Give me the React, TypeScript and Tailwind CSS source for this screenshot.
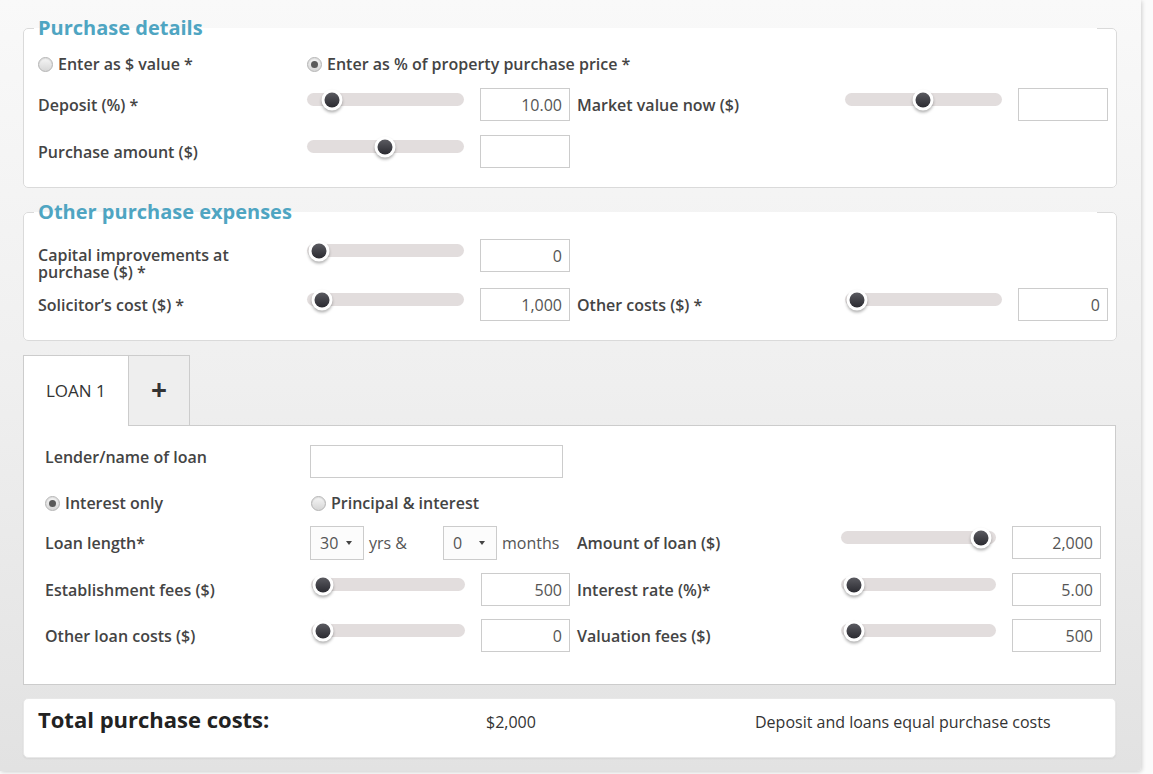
import React from "react";

const font = "font-['Open_Sans',sans-serif]";

const Radio = ({ checked }: { checked?: boolean }) => (
    <span className="flex h-[15px] w-[15px] shrink-0 items-center justify-center rounded-full border border-[#b4b4b4] bg-linear-to-b from-[#f6f6f6] to-[#d6d6d6] shadow-[inset_0_1px_1px_rgba(0,0,0,0.1)]">
        {checked && <span className="h-[7px] w-[7px] rounded-full bg-[#5a5a5a]" />}
    </span>
);

const Slider = ({ pos, w }: { pos: number; w: string }) => (
    <div className={`relative mt-[5px] h-[13px] shrink-0 rounded-full bg-[#e2dddd] ${w}`}>
        <span
            className="absolute top-1/2 flex h-[21px] w-[21px] -translate-x-1/2 -translate-y-1/2 items-center justify-center rounded-full bg-white shadow-[0_2px_3px_rgba(0,0,0,0.3)]"
            style={{ left: pos }}
        >
            <span className="h-[15px] w-[15px] rounded-full bg-linear-to-b from-[#5b5b61] to-[#2b2b31]" />
        </span>
    </div>
);

const NumBox = ({ value, w, ml = "ml-[16px]" }: { value: string; w: string; ml?: string }) => (
    <div className={`flex h-[33px] shrink-0 items-center justify-end border border-[#cccccc] bg-white pr-[7px] text-[16px] text-[#555] ${w} ${ml}`}>
        {value}
    </div>
);

const Label = ({ children, w, pt = "pt-[7px]" }: { children: React.ReactNode; w: string; pt?: string }) => (
    <div className={`shrink-0 text-[16px] leading-5 font-semibold text-[#444] ${pt} ${w}`}>{children}</div>
);

const Select = ({ value }: { value: string }) => (
    <div className="flex h-[34px] w-[54px] shrink-0 items-center border border-[#cccccc] bg-[#fcfcfc] pl-[9px] text-[16px] text-[#555]">
        <span className="w-[26px]">{value}</span>
        <span className="h-0 w-0 border-x-[3.5px] border-t-[4px] border-x-transparent border-t-[#444]" />
    </div>
);

const Fieldset = ({ title, children }: { title: string; children: React.ReactNode }) => (
    <fieldset className="w-[1094px] rounded-[5px] border border-[#dadada] bg-white pr-[7px] pb-[19px] pl-[10px]">
        <legend className="w-[1063px] pl-[4px] text-[20px] leading-7 font-bold text-[#4fa5c2]">{title}</legend>
        <div className="ml-[4px] flex flex-col">{children}</div>
    </fieldset>
);

type Half = { label: React.ReactNode; pos: number; value: string };

const PurchaseRow = ({ left, right, h = "h-[33px]", pt }: { left: Half; right?: Half; h?: string; pt?: string }) => (
    <div className={`flex items-start ${h}`}>
        <Label w="w-[269px]" pt={pt}>
            {left.label}
        </Label>
        <Slider pos={left.pos} w="w-[157px]" />
        <NumBox value={left.value} w="w-[90px]" />
        {right && (
            <>
                <div className="ml-[7px]">
                    <Label w="w-[268px]">{right.label}</Label>
                </div>
                <Slider pos={right.pos} w="w-[157px]" />
                <NumBox value={right.value} w="w-[90px]" />
            </>
        )}
    </div>
);

const LoanRow = ({ left, right }: { left: Half; right: Half }) => (
    <div className="flex h-[33px] items-start">
        <Label w="w-[266px]">{left.label}</Label>
        <Slider pos={left.pos} w="w-[154px]" />
        <NumBox value={left.value} w="w-[89px]" />
        <div className="ml-[7px]">
            <Label w="w-[264px]">{right.label}</Label>
        </div>
        <Slider pos={right.pos} w="w-[155px]" />
        <NumBox value={right.value} w="w-[89px]" />
    </div>
);

const App = () => {
    return (
        <div className={`h-[774px] w-[1153px] overflow-hidden bg-[#fbfbfb] ${font}`}>
            <div className="h-[771px] w-[1141px] rounded-br-[4px] bg-linear-to-b from-[#f9f9f9] via-[#efefef] to-[#e2e2e2] pt-[14px] pl-[23px] shadow-[1px_1px_4px_rgba(0,0,0,0.18)]">
                <Fieldset title="Purchase details">
                    <div className="mt-[12px] flex h-[20px] items-center text-[16px] font-semibold text-[#444]">
                        <div className="flex w-[269px] items-center gap-[5px]">
                            <Radio />
                            <span>Enter as $ value *</span>
                        </div>
                        <div className="flex items-center gap-[5px]">
                            <Radio checked />
                            <span>Enter as % of property purchase price *</span>
                        </div>
                    </div>
                    <div className="mt-[14px] flex flex-col gap-[14px]">
                        <PurchaseRow
                            left={{ label: "Deposit (%) *", pos: 25, value: "10.00" }}
                            right={{ label: "Market value now ($)", pos: 78, value: "" }}
                        />
                        <PurchaseRow left={{ label: "Purchase amount ($)", pos: 78, value: "" }} />
                    </div>
                </Fieldset>

                <div className="mt-[10px]">
                    <Fieldset title="Other purchase expenses">
                        <div className="mt-[13px] flex flex-col gap-[14px]">
                            <PurchaseRow
                                h="h-[35px]"
                                pt="pt-[8px] leading-[17px]"
                                left={{
                                    label: (
                                        <>
                                            Capital improvements at
                                            <br />
                                            purchase ($) *
                                        </>
                                    ),
                                    pos: 12,
                                    value: "0"
                                }}
                            />
                            <PurchaseRow
                                left={{ label: "Solicitor’s cost ($) *", pos: 15, value: "1,000" }}
                                right={{ label: "Other costs ($) *", pos: 12, value: "0" }}
                            />
                        </div>
                    </Fieldset>
                </div>

                <div className="mt-[14px] flex">
                    <div className="relative z-10 flex h-[71px] w-[106px] items-center border border-b-0 border-[#cccccc] bg-white pl-[22px] text-[17px] text-[#333]">
                        LOAN 1
                    </div>
                    <div className="-ml-px flex h-[71px] w-[62px] items-center justify-center border border-[#cccccc] bg-[#eeeeee] pb-[4px] text-[28px] leading-none font-bold text-[#333]">
                        +
                    </div>
                </div>
                <div className="-mt-px w-[1093px] border border-[#cccccc] bg-white pt-[19px] pb-[32px] pl-[21px]">
                    <div className="flex h-[33px] items-start">
                        <Label w="w-[265px]" pt="pt-[2px]">
                            Lender/name of loan
                        </Label>
                        <div className="h-[33px] w-[253px] border border-[#cccccc] bg-white" />
                    </div>
                    <div className="mt-[15px] flex h-[20px] items-center text-[16px] font-semibold text-[#444]">
                        <div className="flex w-[266px] items-center gap-[5px]">
                            <Radio checked />
                            <span>Interest only</span>
                        </div>
                        <div className="flex items-center gap-[5px]">
                            <Radio />
                            <span>Principal &amp; interest</span>
                        </div>
                    </div>
                    <div className="mt-[13px] flex h-[34px] items-start">
                        <Label w="w-[265px]">Loan length*</Label>
                        <Select value="30" />
                        <span className="ml-[5px] w-[74px] shrink-0 pt-[7px] text-[16px] leading-5 text-[#555]">yrs &amp;</span>
                        <Select value="0" />
                        <span className="ml-[5px] w-[75px] shrink-0 pt-[7px] text-[16px] leading-5 text-[#555]">months</span>
                        <Label w="w-[264px]">Amount of loan ($)</Label>
                        <Slider pos={140} w="w-[155px]" />
                        <NumBox value="2,000" w="w-[89px]" />
                    </div>
                    <div className="mt-[13px] flex flex-col gap-[13px]">
                        <LoanRow
                            left={{ label: "Establishment fees ($)", pos: 12, value: "500" }}
                            right={{ label: "Interest rate (%)*", pos: 13, value: "5.00" }}
                        />
                        <LoanRow
                            left={{ label: "Other loan costs ($)", pos: 12, value: "0" }}
                            right={{ label: "Valuation fees ($)", pos: 13, value: "500" }}
                        />
                    </div>
                </div>

                <div className="mt-[13px] flex h-[60px] w-[1093px] items-start rounded-[5px] border border-[#e8e8e8] bg-white pl-[14px] shadow-[0_1px_2px_rgba(0,0,0,0.06)]">
                    <div className="w-[448px] shrink-0 pt-[6px] text-[22px] leading-7 font-bold text-[#222]">Total purchase costs:</div>
                    <div className="w-[269px] shrink-0 pt-[13px] text-[16px] leading-5 text-[#333]">$2,000</div>
                    <div className="pt-[13px] text-[16px] leading-5 text-[#333]">Deposit and loans equal purchase costs</div>
                </div>
            </div>
        </div>
    );
};

export default App;
